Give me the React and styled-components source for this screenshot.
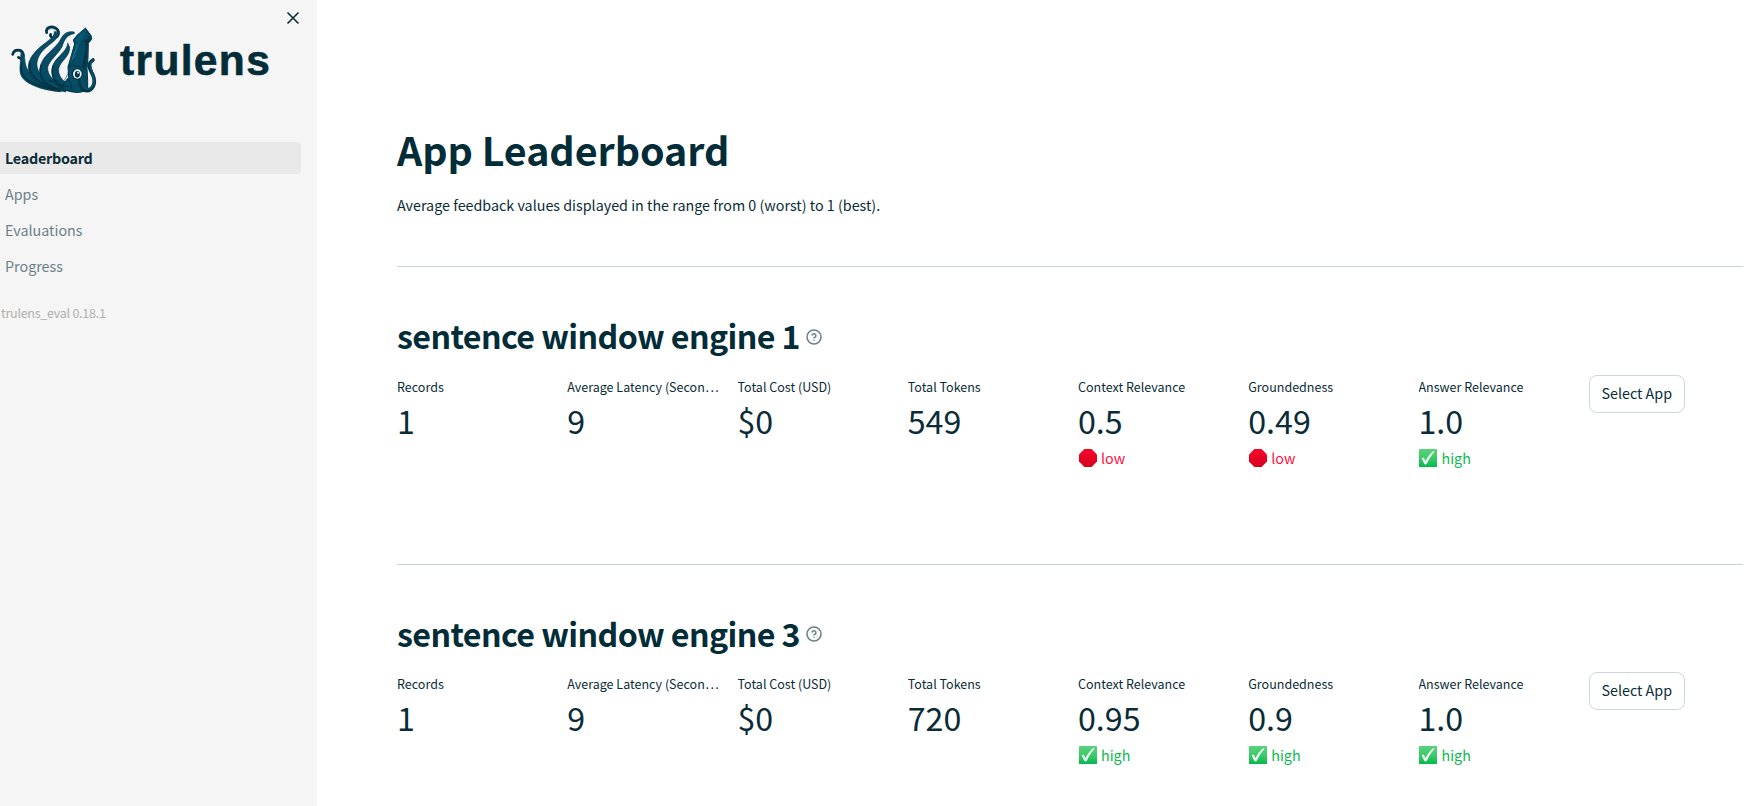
import React from "react";
import styled, { createGlobalStyle } from "styled-components";

const Global = createGlobalStyle`
  *, *::before, *::after { box-sizing: border-box; }
  body {
    margin: 0;
    background: #fff;
    color: #0a2c37;
    font-family: "Source Sans Pro", "Noto Sans CJK SC", "Noto Sans", sans-serif;
    font-size: 14.32px;
    overflow: hidden;
  }
  h1, h2, p { margin: 0; }
`;

const Page = styled.div`
  display: flex;
  height: 806px;
  overflow: hidden;
`;

const Sidebar = styled.aside`
  flex: 0 0 317px;
  background: #f5f5f5;
  display: flex;
  flex-direction: column;
`;

const Brand = styled.div`
  display: flex;
  align-items: flex-start;
  height: 142px;
  padding: 25px 17px 0 10px;
`;

const Wordmark = styled.span`
  margin: 13px 0 0 20px;
  width: 160px;
  font: 700 42.5px/46px "Liberation Sans", Arial, sans-serif;
  letter-spacing: 1.35px;
  -webkit-text-stroke: 0.6px #022d38;
  color: #022d38;
`;

const CloseButton = styled.button`
  margin: -14px 0 0 auto;
  padding: 0;
  border: 0;
  background: none;
  width: 14px;
  height: 14px;
  display: flex;
  align-items: center;
  justify-content: center;
`;

const Nav = styled.nav`
  display: flex;
  flex-direction: column;
  gap: 4px;
`;

const NavItem = styled.a`
  height: 32px;
  line-height: 32px;
  width: 301px;
  padding-left: 5px;
  border-radius: 0 4px 4px 0;
  background: ${(p) => (p.$active ? "#e9e9e9" : "transparent")};
  color: ${(p) => (p.$active ? "#0a2c37" : "#6c8087")};
  font-weight: ${(p) => (p.$active ? 700 : 400)};
  letter-spacing: ${(p) => (p.$active ? "-0.23px" : "normal")};
`;

const Version = styled.p`
  margin-top: 20px;
  padding-left: 1px;
  font-size: 12.53px;
  letter-spacing: -0.26px;
  line-height: 22px;
  color: #b0b0b0;
`;

const Main = styled.main`
  flex: 1;
  min-width: 0;
  padding: 122px 21px 0 80px;
`;

const Title = styled.h1`
  font-size: 39.4px;
  line-height: 53px;
  font-weight: 700;
  letter-spacing: -0.05px;
  color: #022d38;
`;

const Intro = styled.p`
  margin-top: 17px;
  line-height: 26px;
`;

const Divider = styled.hr`
  margin: ${(p) => p.$top || 0}px 0 0;
  border: 0;
  height: 1px;
  background: #c9d4d7;
`;

const AppSection = styled.section`
  height: 296.5px;
  padding-top: 47px;
`;

const Heading = styled.div`
  display: flex;
  align-items: center;
  gap: 6px;
  height: 43px;

  svg { margin-top: 2px; }
`;

const AppName = styled.h2`
  font-size: 32.2px;
  line-height: 43px;
  font-weight: 600;
  letter-spacing: -0.6px;
  white-space: nowrap;
  color: #022d38;
`;

const Metrics = styled.div`
  display: grid;
  grid-template-columns: repeat(8, minmax(0, 1fr));
  column-gap: 16px;
  margin-top: 17.6px;
`;

const Label = styled.div`
  display: flex;
  font-size: 12.53px;
  line-height: 23px;
  height: 23px;
  white-space: nowrap;
  overflow: hidden;
`;

const Ellipsis = styled.span`
  letter-spacing: 1.3px;
  padding-left: 0.8px;
`;

const Value = styled.div`
  margin-top: 1px;
  font-size: 32.2px;
  line-height: 43px;
`;

const Delta = styled.div`
  display: flex;
  align-items: center;
  gap: 4.4px;
  margin-top: 3px;
  padding-left: 0.6px;
  line-height: 26px;
  color: ${(p) => (p.$high ? "#09bb4b" : "#ff0f3c")};
`;

const SelectButton = styled.button`
  justify-self: start;
  width: 96px;
  height: 38px;
  padding: 0 0 2px;
  border: 1px solid #ced7d9;
  border-radius: 8px;
  background: #fff;
  color: inherit;
  font: inherit;
  line-height: 34px;
  white-space: nowrap;
`;

const Squid = () => (
  <svg width="90" height="70" viewBox="30 75 270 210" fill="none" strokeLinecap="round" strokeLinejoin="round">
    <g stroke="#033446">
      <path d="M38 163C42 146 66 146 70 163C72 174 62 178 55 172" strokeWidth="8" />
      <path d="M140 98C136 81 154 78 165 83C180 91 179 110 164 113C155 115 149 108 152 103" strokeWidth="8" />
    </g>
    <g fill="#064b64" stroke="#033446" strokeWidth="2">
      <path d="M64 152C79 168 71 190 82 208C92 226 115 236 132 250L180 275C140 272 98 260 76 242C52 224 62 196 62 176Z" />
      <path d="M176 98C176 118 150 130 130 150C110 172 106 194 116 214C128 236 152 248 172 256L184 275C140 266 90 247 85 206C82 176 108 150 135 130C150 117 164 110 163 95Z" />
      <path d="M222 96C205 92 190 100 182 118C172 138 150 152 132 175C110 206 118 241 150 264L197 276L195 258C165 250 141 226 143 202C148 180 176 162 187 138C193 118 202 104 222 101Z" />
      <path d="M203 130C202 150 180 165 166 182C148 206 152 245 185 268L217 276L214 257C186 246 171 222 177 202C182 184 211 168 209 142Z" />
    </g>
    <g stroke="#02303f" strokeWidth="4">
      <path d="M65 188C61 209 66 229 84 241C110 257 145 266 172 269" />
      <path d="M90 188C83 222 112 250 172 268" />
      <path d="M124 194C112 225 130 254 178 269" />
      <path d="M160 197C150 225 166 255 200 270" />
    </g>
    <g stroke="#0c5873" strokeWidth="2">
      <path d="M44 158C50 150 60 152 65 159M72 178C73 196 79 207 87 216" />
      <path d="M146 89C153 84 163 85 169 91M164 113C148 132 120 147 107 169" />
      <path d="M207 99C192 101 189 112 183 126M178 135C165 153 145 163 135 182" />
      <path d="M204 151C193 169 178 177 170 191" />
    </g>
    <path d="M257 85L274 108L274 119L265 130L264 174L261 205Q264 246 263 269Q236 283 211 274L186 268L193 248L206 232L204 201L224 132L220 120L231 106Z" fill="#064b64" stroke="#033446" strokeWidth="3" />
    <path d="M257 89L235 109L225 120L234 126L219 171L225 173L240 126L251 112Z" fill="#085870" />
    <path d="M259 89L269 112L248 126L256 129L253 163L246 200L258 203L264 130L273 116Z" fill="#04374a" />
    <path d="M232 134L217 177" stroke="#2d879e" strokeWidth="2" />
    <path d="M205 199Q230 190 257 209" stroke="#033446" strokeWidth="3" />
    <path d="M207 210Q200 236 186 249M214 207Q205 234 216 247Q225 257 241 243" stroke="#0c5873" strokeWidth="2" />
    <path d="M144 238Q158 251 170 240Q177 257 207 260M206 238Q216 251 216 268" stroke="#02303f" strokeWidth="3" />
    <path d="M279 180C259 193 270 208 279 226C289 250 278 272 260 272C242 272 241 254 240 243" stroke="#033446" strokeWidth="11" />
    <path d="M279 179C263 193 276 212 281 234C284 259 268 272 254 265C246 259 246 249 245 241" stroke="#06506c" strokeWidth="6" />
    <ellipse cx="232" cy="222" rx="16" ry="17" fill="#032f40" />
    <ellipse cx="232" cy="222" rx="13" ry="14" fill="#f5f5f5" />
    <ellipse cx="232" cy="223" rx="7.5" ry="10" fill="#043747" />
    <circle cx="234" cy="218" r="3" fill="#e6eef0" />
  </svg>
);

const CloseIcon = () => (
  <svg width="14" height="14" viewBox="0 0 14 14" stroke="#0a2c37" strokeWidth="1.6" fill="none">
    <path d="M1.5 1.5L12.5 12.5M12.5 1.5L1.5 12.5" />
  </svg>
);

const HelpIcon = () => (
  <svg width="16" height="16" viewBox="0 0 24 24" fill="none" stroke="#6c8087" strokeWidth="2.3" strokeLinecap="round" strokeLinejoin="round">
    <circle cx="12" cy="12" r="10.5" />
    <path d="M9.09 9a3 3 0 0 1 5.83 1c0 2-3 3-3 3M12 17h.01" />
  </svg>
);

const StopIcon = () => (
  <svg width="18" height="18" viewBox="0 0 18 18">
    <defs>
      <linearGradient id="stop" x1="0" y1="0" x2="0" y2="1">
        <stop offset="0" stopColor="#fa0529" />
        <stop offset="1" stopColor="#d1021f" />
      </linearGradient>
    </defs>
    <path d="M5.4 0h7.2L18 5.4v7.2L12.6 18H5.4L0 12.6V5.4Z" fill="url(#stop)" />
  </svg>
);

const CheckIcon = () => (
  <svg width="18" height="18" viewBox="0 0 18 18">
    <defs>
      <linearGradient id="check" x1="0" y1="0" x2="0" y2="1">
        <stop offset="0" stopColor="#5bd27c" />
        <stop offset="0.5" stopColor="#3ccb69" />
        <stop offset="1" stopColor="#05b84d" />
      </linearGradient>
    </defs>
    <rect width="18" height="18" rx="0.6" fill="url(#check)" />
    <path d="M2.6 9.2C4 8 4.8 8.3 5.2 9.2L6.4 12C8.4 8.2 11 4.9 13.6 2.5C14.5 1.9 15.8 2.1 15.7 2.6C12.2 6.5 9.8 10.5 8 14.6C7.3 15.7 5.6 15.7 5.2 14.7Z" fill="#f0f0f0" />
  </svg>
);

const apps = [
  { name: "sentence window engine 1", tokens: "549", scores: [["Context Relevance", "0.5", "low"], ["Groundedness", "0.49", "low"], ["Answer Relevance", "1.0", "high"]] },
  { name: "sentence window engine 3", tokens: "720", scores: [["Context Relevance", "0.95", "high"], ["Groundedness", "0.9", "high"], ["Answer Relevance", "1.0", "high"]] },
];

function Metric({ label, value, level, truncated }) {
  return (
    <div>
      <Label>
        {label}
        {truncated && <Ellipsis>...</Ellipsis>}
      </Label>
      <Value>{value}</Value>
      {level && (
        <Delta $high={level === "high"}>
          {level === "high" ? <CheckIcon /> : <StopIcon />}
          <span>{level}</span>
        </Delta>
      )}
    </div>
  );
}

export default function App() {
  return (
    <Page>
      <Global />
      <Sidebar>
        <Brand>
          <Squid />
          <Wordmark>trulens</Wordmark>
          <CloseButton aria-label="Close sidebar"><CloseIcon /></CloseButton>
        </Brand>
        <Nav>
          <NavItem $active>Leaderboard</NavItem>
          <NavItem>Apps</NavItem>
          <NavItem>Evaluations</NavItem>
          <NavItem>Progress</NavItem>
        </Nav>
        <Version>trulens_eval 0.18.1</Version>
      </Sidebar>
      <Main>
        <Title>App Leaderboard</Title>
        <Intro>Average feedback values displayed in the range from 0 (worst) to 1 (best).</Intro>
        {apps.map((app, i) => (
          <React.Fragment key={app.name}>
            <Divider $top={i === 0 ? 48 : 0} />
            <AppSection>
              <Heading>
                <AppName>{app.name}</AppName>
                <HelpIcon />
              </Heading>
              <Metrics>
                <Metric label="Records" value="1" />
                <Metric label="Average Latency (Secon" truncated value="9" />
                <Metric label="Total Cost (USD)" value="$0" />
                <Metric label="Total Tokens" value={app.tokens} />
                {app.scores.map(([label, value, level]) => (
                  <Metric key={label} label={label} value={value} level={level} />
                ))}
                <SelectButton>Select App</SelectButton>
              </Metrics>
            </AppSection>
          </React.Fragment>
        ))}
      </Main>
    </Page>
  );
}
